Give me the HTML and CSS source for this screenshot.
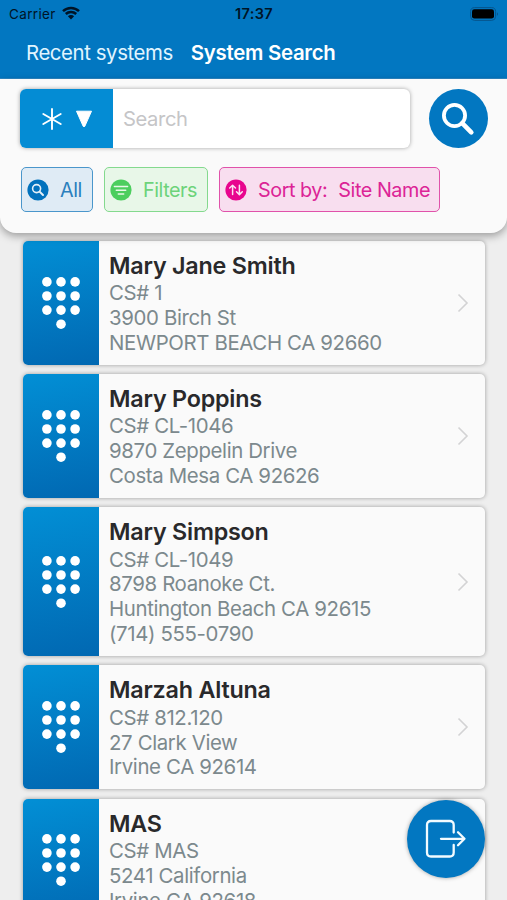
FILE: index.html
```html
<!DOCTYPE html>
<html lang="en">

<head>
    <meta charset="UTF-8">
    <meta name="viewport" content="width=device-width, initial-scale=1.0">
    <title>System Search</title>
    <link rel="stylesheet" href="styles.css">
</head>

<body>
    <!-- shared icons -->
    <svg class="defs">
        <symbol id="keypad" viewBox="0 0 38 52">
            <circle cx="4.9" cy="4.9" r="4.8"/><circle cx="19" cy="4.9" r="4.8"/><circle cx="33.1" cy="4.9" r="4.8"/>
            <circle cx="4.9" cy="19" r="4.8"/><circle cx="19" cy="19" r="4.8"/><circle cx="33.1" cy="19" r="4.8"/>
            <circle cx="4.9" cy="33.1" r="4.8"/><circle cx="19" cy="33.1" r="4.8"/><circle cx="33.1" cy="33.1" r="4.8"/>
            <circle cx="19" cy="47.2" r="4.8"/>
        </symbol>
        <symbol id="chevron" viewBox="0 0 12 20">
            <path d="M1.5 1.5L10 10L1.5 18.5" fill="none" stroke="#d3d3d4" stroke-width="1.6"/>
        </symbol>
    </svg>

    <header class="top">
        <div class="status">
            <div class="carrier">
                <span>Carrier</span>
                <svg class="wifi" viewBox="0 0 18 14">
                    <path d="M1 5.1A11.6 11.6 0 0 1 17 5.1M3.8 8A7.5 7.5 0 0 1 14.2 8" fill="none" stroke="#001426" stroke-width="2.5"/>
                    <path d="M9 13.4L5.9 10.2A4.4 4.4 0 0 1 12.1 10.2Z" fill="#001426"/>
                </svg>
            </div>
            <span class="time">17:37</span>
            <svg class="battery" viewBox="0 0 29 14">
                <rect x=".6" y=".6" width="25" height="12.8" rx="4" fill="none" stroke="#06548c" stroke-width="1"/>
                <rect x="2" y="2.2" width="22" height="9.4" rx="2.4" fill="#000"/>
                <path d="M27 5.2Q29 7 27 8.8Z" fill="#06548c"/>
            </svg>
        </div>
        <nav class="tabs">
            <a class="tab">Recent systems</a>
            <a class="tab active">System Search</a>
        </nav>
    </header>

    <section class="panel">
        <div class="searchrow">
            <div class="searchbox">
                <div class="scope">
                    <svg class="star" viewBox="0 0 20 22">
                        <path d="M10 1V21M1.3 6L18.7 16M18.7 6L1.3 16" stroke="#fff" stroke-width="1.9" stroke-linecap="round"/>
                    </svg>
                    <svg class="arrow" viewBox="0 0 18 18">
                        <path d="M1.5 1.2H16.5L9.8 16.3Q9 17.4 8.2 16.3Z" fill="#fff" stroke="#fff" stroke-linejoin="round"/>
                    </svg>
                </div>
                <span class="hint">Search</span>
            </div>
            <div class="go">
                <svg viewBox="0 0 34 34">
                    <circle cx="13.5" cy="13.5" r="10.6" fill="none" stroke="#fff" stroke-width="3.8"/>
                    <path d="M21.2 21.2L30.3 30.3" stroke="#fff" stroke-width="4.6" stroke-linecap="round"/>
                </svg>
            </div>
        </div>
        <div class="chips">
            <div class="chip all">
                <svg viewBox="0 0 22 22">
                    <circle cx="11" cy="11" r="10.6" fill="#0272bd"/>
                    <circle cx="9.6" cy="9.6" r="4" fill="none" stroke="#e4f0f8" stroke-width="1.6"/>
                    <path d="M12.6 12.6L16 16" stroke="#e4f0f8" stroke-width="2" stroke-linecap="round"/>
                </svg>
                <span>All</span>
            </div>
            <div class="chip filters">
                <svg viewBox="0 0 22 22">
                    <circle cx="11" cy="11" r="10.6" fill="#4cce5e"/>
                    <path d="M4.4 7.6H17.6M6.3 11.3H15.7M8.3 15H13.7" stroke="#e8f8e8" stroke-width="1.5" stroke-linecap="round"/>
                </svg>
                <span>Filters</span>
            </div>
            <div class="chip sort">
                <svg viewBox="0 0 22 22">
                    <circle cx="11" cy="11" r="10.6" fill="#e8058e"/>
                    <path d="M7.6 15.4V6.4M4.7 9L7.6 6.2L10.5 9M14.4 6.2V15.4M11.5 12.8L14.4 15.6L17.3 12.8" fill="none" stroke="#fbe3f1" stroke-width="1.5" stroke-linecap="round" stroke-linejoin="round"/>
                </svg>
                <span class="label">Sort by:</span><span class="value">Site Name</span>
            </div>
        </div>
    </section>

    <main class="list">
        <div class="card">
            <div class="side"><svg><use href="#keypad"/></svg></div>
            <div class="info">
                <h3>Mary Jane Smith</h3>
                <p>CS# 1</p>
                <p>3900 Birch St</p>
                <p>NEWPORT BEACH CA 92660</p>
            </div>
            <svg class="chev"><use href="#chevron"/></svg>
        </div>
        <div class="card">
            <div class="side"><svg><use href="#keypad"/></svg></div>
            <div class="info">
                <h3>Mary Poppins</h3>
                <p>CS# CL-1046</p>
                <p>9870 Zeppelin Drive</p>
                <p>Costa Mesa CA 92626</p>
            </div>
            <svg class="chev"><use href="#chevron"/></svg>
        </div>
        <div class="card">
            <div class="side"><svg><use href="#keypad"/></svg></div>
            <div class="info">
                <h3>Mary Simpson</h3>
                <p>CS# CL-1049</p>
                <p>8798 Roanoke Ct.</p>
                <p>Huntington Beach CA 92615</p>
                <p>(714) 555-0790</p>
            </div>
            <svg class="chev"><use href="#chevron"/></svg>
        </div>
        <div class="card">
            <div class="side"><svg><use href="#keypad"/></svg></div>
            <div class="info">
                <h3>Marzah Altuna</h3>
                <p>CS# 812.120</p>
                <p>27 Clark View</p>
                <p>Irvine CA 92614</p>
            </div>
            <svg class="chev"><use href="#chevron"/></svg>
        </div>
        <div class="card">
            <div class="side"><svg><use href="#keypad"/></svg></div>
            <div class="info">
                <h3>MAS</h3>
                <p>CS# MAS</p>
                <p>5241 California</p>
                <p>Irvine CA 92618</p>
            </div>
        </div>
    </main>

    <!-- floating exit button -->
    <div class="exit">
        <svg viewBox="0 0 42 40">
            <path d="M28.7 13.5V6Q28.7 2 24.7 2H6Q2 2 2 6V33.5Q2 37.5 6 37.5H24.7Q28.7 37.5 28.7 33.5V26M16 19.8H39.5M33 13.3L39.5 19.8L33 26.3" fill="none" stroke="#f2fbff" stroke-width="2.3" stroke-linecap="round" stroke-linejoin="round"/>
        </svg>
    </div>
</body>

</html>
```

FILE: styles.css
```css
* {
    margin: 0;
    padding: 0;
    box-sizing: border-box;
}
body {
    position: relative;
    height: 900px;
    overflow: hidden;
    background-color: #eeeeee;
    font-family: Inter, "Liberation Sans", sans-serif;
}
.defs {
    display: none;
}
.top {
    height: 79px;
    background-color: #0277c1;
    border-bottom: 1px solid #2c87c5;
}

.status {
    display: grid;
    grid-template-columns: 1fr auto 1fr;
    align-items: center;
    height: 27px;
    padding: 0 8px 0 9px;
    color: #001426;
    font-size: 13.5px;
}
.carrier {
    display: flex;
    align-items: center;
    gap: 6px;
    letter-spacing: 0.35px;
}
.wifi {
    width: 18px;
    height: 14px;
    margin-top: -2px;
}
.time {
    font-size: 14.5px;
    font-weight: 600;
    letter-spacing: 0.4px;
}
.battery {
    width: 29px;
    height: 14px;
    justify-self: end;
}
.tabs {
    display: flex;
    gap: 18px;
    padding-left: 26px;
    line-height: 52px;
    font-size: 20.4px;
    letter-spacing: -0.42px;
    color: #e0f5ff;
    white-space: nowrap;
}
.tab.active {
    font-weight: 600;
    letter-spacing: -0.27px;
    color: #fff;
}

.panel {
    position: relative;
    z-index: 2;
    height: 154px;
    padding: 10px 19.3px 0 20px;
    background-color: #fafafa;
    border-radius: 0 0 16px 16px;
    box-shadow: 0 3px 9px rgba(0,0,0,0.35);
}
.searchrow {
    display: flex;
    justify-content: space-between;
}
.searchbox {
    display: flex;
    align-items: center;
    width: 390px;
    height: 59px;
    background-color: #fff;
    border-radius: 6px;
    box-shadow: 0 0 4px rgba(0,0,0,0.35);
    overflow: hidden;
}
.scope {
    display: flex;
    align-items: center;
    gap: 13px;
    width: 93px;
    height: 59px;
    padding-left: 21.5px;
    background-color: #048cd4;
}
.star {
    width: 20px;
    height: 22px;
}
.arrow {
    width: 18px;
    height: 18px;
}
.hint {
    margin-left: 10px;
    font-size: 20.2px;
    letter-spacing: -0.4px;
    color: #c5c5c7;
}
.go {
    display: flex;
    align-items: center;
    justify-content: center;
    width: 59px;
    height: 59px;
    border-radius: 50%;
    background-color: #0277c1;
}
.go svg {
    width: 34px;
    height: 34px;
}

.chips {
    display: flex;
    gap: 11px;
    margin-top: 19px;
    padding-left: 1px;
    font-size: 19.8px;
    letter-spacing: -0.45px;
    white-space: nowrap;
}
.chip {
    display: flex;
    align-items: center;
    height: 45px;
    padding-left: 5px;
    border: 1.5px solid;
    border-radius: 5px;
}
.chip svg {
    width: 22px;
    height: 22px;
    margin-right: 11px;
}
.all {
    width: 72px;
    color: #2b7fbd;
    background-color: #dfebf5;
    border-color: #4a96cb;
}
.filters {
    width: 104px;
    color: #6dd37a;
    background-color: #e8f7e8;
    border-color: #84d98e;
}
.sort {
    width: 221px;
    color: #dc2496;
    background-color: #f8deef;
    border-color: #e052aa;
}
.value {
    margin-left: 11px;
}

.list {
    display: flex;
    flex-direction: column;
    gap: 9.3px;
    padding: 7.8px 22px 0 23px;
}
.card {
    display: flex;
    flex-shrink: 0;
    align-items: center;
    background-color: #fafafa;
    border-radius: 5px;
    box-shadow: 0 0 4px rgba(0,0,0,0.35);
    overflow: hidden;
}
.side {
    display: flex;
    align-self: stretch;
    align-items: center;
    justify-content: center;
    width: 76px;
    background: linear-gradient(170deg, #028fd5, #0168b2);
}
.side svg {
    width: 38px;
    height: 52px;
    fill: #fff;
}
.info {
    flex: 1;
    padding: 11px 0 8.9px 10px;
    white-space: nowrap;
}
.info h3 {
    margin-bottom: 0.8px;
    line-height: 28.5px;
    font-size: 23.3px;
    font-weight: 600;
    letter-spacing: -0.2px;
    color: #29292b;
}
.info p {
    line-height: 24.9px;
    font-size: 20.4px;
    letter-spacing: -0.36px;
    color: #7c898d;
}
.chev {
    width: 12px;
    height: 20px;
    margin-right: 16px;
}

.exit {
    position: absolute;
    z-index: 3;
    left: 407px;
    top: 800px;
    display: flex;
    align-items: center;
    justify-content: center;
    width: 78px;
    height: 78px;
    border-radius: 50%;
    background-color: #0277c1;
    box-shadow: 0 0 4px rgba(0,0,0,0.35);
}
.exit svg {
    width: 42px;
    height: 40px;
}
```
